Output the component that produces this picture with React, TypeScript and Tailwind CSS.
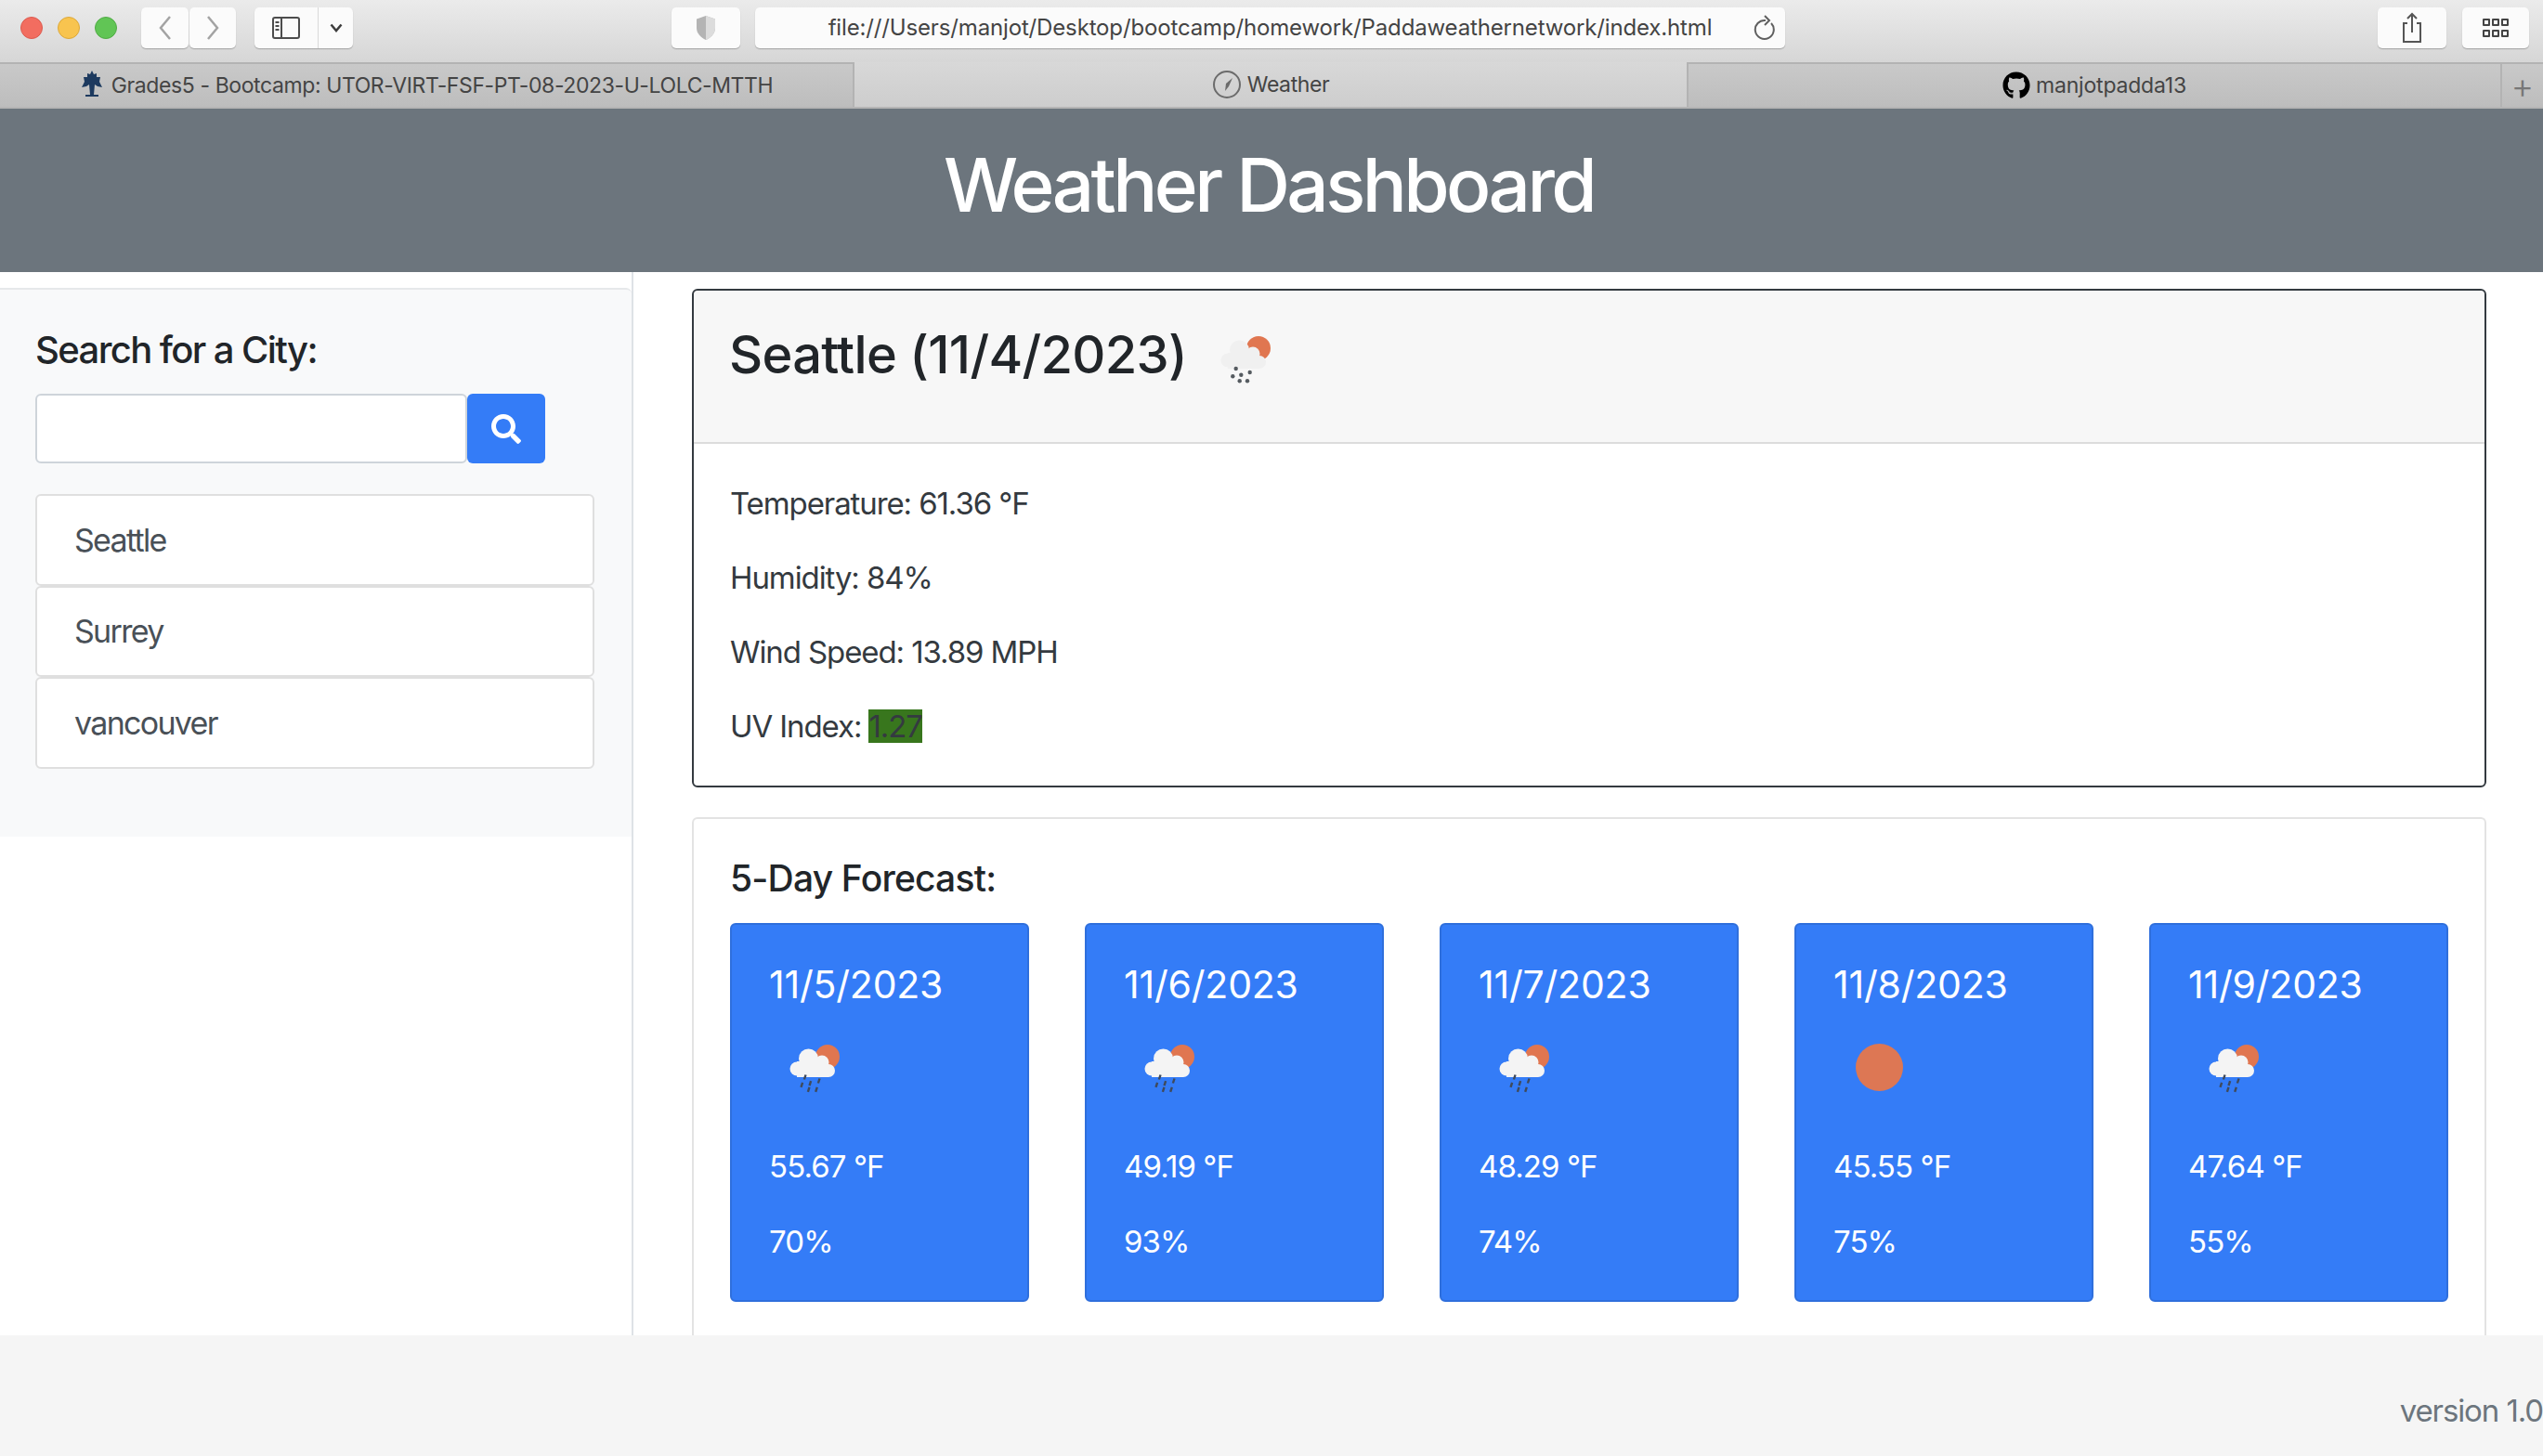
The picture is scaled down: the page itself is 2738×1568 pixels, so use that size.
import { FaGithub, FaSearch } from "react-icons/fa";

const Rain = ({ dots }: { dots?: boolean }) => {
    const drops = [
        [21.7, 45],
        [18.3, 53.3],
        [27.3, 51.7],
        [36.7, 49],
        [25.7, 58.3],
        [34, 58.3],
    ];
    return (
        <g>
            {drops.map(([x, y], i) =>
                dots ? (
                    <circle key={i} cx={x} cy={y} r="2.2" fill="#555b60" />
                ) : (
                    <line key={i} x1={x + 0.8} y1={y - 2.5} x2={x - 0.8} y2={y + 2.5} stroke="#3f4a5c" strokeWidth="2.4" />
                ),
            )}
        </g>
    );
};

const CloudIcon = ({ cloud = "#f4f4f4", dots }: { cloud?: string; dots?: boolean }) => (
    <svg width="80" height="80" viewBox="0 0 80 80" className="block blur-[0.5px]">
        <circle cx="46" cy="23" r="13" fill="#e07650" />
        <g fill={cloud}>
            <circle cx="25.5" cy="25" r="10.5" />
            <circle cx="40" cy="29" r="7.5" />
            <circle cx="13" cy="36" r="7.5" />
            <circle cx="47" cy="38" r="7" />
            <rect x="13" y="28" width="34" height="17" />
        </g>
        <Rain dots={dots} />
    </svg>
);

const SunIcon = () => (
    <svg width="80" height="80" viewBox="0 0 80 80" className="block blur-[0.5px]">
        <circle cx="32.5" cy="34.5" r="25.5" fill="#dd7754" />
    </svg>
);

const TreeIcon = () => (
    <svg width="26" height="34" viewBox="0 0 26 34" fill="#1d3a5f">
        <path d="M13 1l2 4 3-1 0 4 4 0-1 5 3 6-5-1-3-2-1 11h5v2H6v-2h5l-1-11-3 2-5 1 3-6-1-5h4l0-4 3 1z" />
    </svg>
);

const ToolButton = ({ className, children }: { className: string; children?: React.ReactNode }) => (
    <div className={`h-[44px] bg-[#fbfbfb] rounded-[5px] shadow-[0_1px_1px_rgba(0,0,0,0.25)] flex items-center justify-center ${className}`}>
        {children}
    </div>
);

const forecast = [
    { date: "11/5/2023", temp: "55.67 °F", hum: "70%" },
    { date: "11/6/2023", temp: "49.19 °F", hum: "93%" },
    { date: "11/7/2023", temp: "48.29 °F", hum: "74%" },
    { date: "11/8/2023", temp: "45.55 °F", hum: "75%", sunny: true },
    { date: "11/9/2023", temp: "47.64 °F", hum: "55%" },
];

const App = () => {
    return (
        <div className="h-screen w-full flex flex-col overflow-hidden bg-white font-['Inter',sans-serif] text-[#212529]">
            {/* browser chrome */}
            <div className="h-[67px] shrink-0 flex items-start pt-[8px] bg-gradient-to-b from-[#ebebeb] to-[#d6d6d6]">
                <div className="flex items-center gap-[16px] ml-[22px] mt-[10px] w-[130px]">
                    <span className="w-[24px] h-[24px] rounded-full bg-[#f26d60] border border-[#dc5b4f]" />
                    <span className="w-[24px] h-[24px] rounded-full bg-[#f8c44f] border border-[#dca83a]" />
                    <span className="w-[24px] h-[24px] rounded-full bg-[#61c555] border border-[#50ab45]" />
                </div>
                <ToolButton className="w-[51px]">
                    <svg width="16" height="30" viewBox="0 0 16 30" fill="none" stroke="#a3a3a3" strokeWidth="2.500">
                        <path d="M13 3L3 15l10 12" />
                    </svg>
                </ToolButton>
                <ToolButton className="w-[50px] ml-[1px]">
                    <svg width="16" height="30" viewBox="0 0 16 30" fill="none" stroke="#a3a3a3" strokeWidth="2.500">
                        <path d="M3 3l10 12L3 27" />
                    </svg>
                </ToolButton>
                <ToolButton className="w-[106px] ml-[20px]">
                    <div className="w-[69px] h-full flex items-center justify-center border-r border-[#d9d9d9]">
                        <svg width="30" height="24" viewBox="0 0 30 24" fill="none" stroke="#4d4d4d" strokeWidth="2">
                            <rect x="1" y="1" width="28" height="22" rx="2" />
                            <path d="M10 1v22" />
                            <path d="M3.500 6h4M3.500 10h4M3.500 14h4" />
                        </svg>
                    </div>
                    <div className="flex-1 flex items-center justify-center">
                        <svg width="14" height="10" viewBox="0 0 14 10" fill="none" stroke="#3d3d3d" strokeWidth="2.500">
                            <path d="M1.500 1.500L7 8l5.500-6.500" />
                        </svg>
                    </div>
                </ToolButton>
                <ToolButton className="w-[74px] ml-[343px]">
                    <svg width="24" height="28" viewBox="0 0 24 28">
                        <path d="M12 1l10 3.500V14c0 6-4.500 10.500-10 13C6.500 24.500 2 20 2 14V4.500z" fill="#b4b4b4" />
                        <path d="M12 1l10 3.500V14c0 6-4.500 10.500-10 13z" fill="#dcdcdc" />
                    </svg>
                </ToolButton>
                <ToolButton className="w-[1109px] ml-[16px] relative">
                    <span className="text-[24px] tracking-[-0.15px] text-[#444]">
                        file:///Users/manjot/Desktop/bootcamp/homework/Paddaweathernetwork/index.html
                    </span>
                    <svg className="absolute right-[10px] top-[8px]" width="26" height="28" viewBox="0 0 26 28" fill="none" stroke="#5f5f5f" strokeWidth="2">
                        <path d="M21 9a10 10 0 1 1-6-3" />
                        <path d="M14 1l5 5-5 5" />
                    </svg>
                </ToolButton>
                <ToolButton className="w-[74px] ml-[638px]">
                    <svg width="24" height="34" viewBox="0 0 24 34" fill="none" stroke="#555" strokeWidth="2">
                        <path d="M7 12H3v20h18V12h-4" />
                        <path d="M12 22V2M7 7l5-5 5 5" />
                    </svg>
                </ToolButton>
                <ToolButton className="w-[72px] ml-[17px]">
                    <div className="grid grid-cols-3 gap-x-[2px] gap-y-[4px]">
                        {[0, 1, 2, 3, 4, 5].map((i) => (
                            <span key={i} className="w-[8px] h-[8px] border-2 border-[#444] rounded-[1px]" />
                        ))}
                    </div>
                </ToolButton>
            </div>

            {/* tabs */}
            <div className="h-[50px] shrink-0 flex text-[23px] text-[#444] border-b-2 border-[#b5b5b5]">
                <div className="w-[920px] flex items-center justify-center gap-[8px] border-t-2 border-r-2 border-[#b3b3b3] bg-gradient-to-b from-[#c9c9c9] to-[#bdbdbd]">
                    <TreeIcon />
                    <span className="tracking-[-0.4px]">Grades5 - Bootcamp: UTOR-VIRT-FSF-PT-08-2023-U-LOLC-MTTH</span>
                </div>
                <div className="w-[896px] flex items-center justify-center gap-[6px] bg-gradient-to-b from-[#d8d8d8] to-[#cdcdcd]">
                    <svg width="32" height="32" viewBox="0 0 32 32" fill="none">
                        <circle cx="16" cy="16" r="14" stroke="#6b6b6b" strokeWidth="2" />
                        <path d="M22 9l-4 9-4 5 1-8z" fill="#6b6b6b" />
                    </svg>
                    <span className="tracking-[-0.4px]">Weather</span>
                </div>
                <div className="w-[876px] flex items-center justify-center gap-[6px] border-t-2 border-l-2 border-[#b3b3b3] bg-gradient-to-b from-[#c9c9c9] to-[#bdbdbd]">
                    <FaGithub className="text-black w-[30px] h-[30px]" />
                    <span className="tracking-[-0.2px]">manjotpadda13</span>
                </div>
                <div className="flex-1 flex items-center justify-center border-t-2 border-l-2 border-[#b3b3b3] bg-gradient-to-b from-[#c9c9c9] to-[#bdbdbd] text-[38px] font-light text-[#777]">
                    +
                </div>
            </div>

            {/* page header */}
            <header className="h-[176px] shrink-0 bg-[#6c757d] flex items-start justify-center pt-[34px]">
                <h1 className="text-white text-[80px] leading-[96px] font-medium tracking-[-3.6px] mr-[6px]">Weather Dashboard</h1>
            </header>

            <div className="flex-1 flex min-h-0">
                <aside className="w-[682px] shrink-0 pt-[17px] border-r-2 border-[#dee2e6]">
                    <div className="h-[591px] bg-[#f8f9fa] border-t-2 border-[#e6e8ea] rounded-tr-md pl-[38px] pt-[41px]">
                        <h2 className="text-[40px] leading-[48px] font-[550] tracking-[-1.6px]">Search for a City:</h2>
                        <div className="flex mt-[23px]">
                            <input className="w-[465px] h-[75px] bg-white border-2 border-[#ced4da] rounded-l-md rounded-r-md" />
                            <button className="w-[84px] h-[75px] bg-[#347cf7] rounded-md flex items-center justify-center text-white">
                                <FaSearch className="w-[32px] h-[32px]" />
                            </button>
                        </div>
                        <ul className="mt-[33px] w-[602px] flex flex-col text-[#495057] text-[34px] tracking-[-1.7px]">
                            {["Seattle", "Surrey", "vancouver"].map((city) => (
                                <li key={city} className="h-[98.5px] bg-white border-2 border-[#dfdfdf] rounded-md flex items-center pl-[40px]">
                                    {city}
                                </li>
                            ))}
                        </ul>
                    </div>
                </aside>

                <main className="flex-1 min-w-0 pl-[63px] pr-[61px] pt-[18px] overflow-hidden flex flex-col">
                    <section className="h-[537px] shrink-0 border-2 border-[#343a40] rounded-md flex flex-col">
                        <div className="h-[165px] shrink-0 bg-[#f7f7f7] border-b-2 border-[#dcdcdc] rounded-t-md pl-[38px] pt-[39px] flex items-start">
                            <h2 className="text-[56px] leading-[60px] font-[550] tracking-[-0.7px]">Seattle (11/4/2023)</h2>
                            <div className="ml-[31px]">
                                <CloudIcon cloud="#f0f0f0" dots />
                            </div>
                        </div>
                        <div className="pl-[39px] pt-[44px] flex flex-col gap-[40px] text-[33px] leading-[40px] text-[#343a40] tracking-[-1.1px]">
                            <p>Temperature: 61.36 °F</p>
                            <p>Humidity: 84%</p>
                            <p>Wind Speed: 13.89 MPH</p>
                            <p>
                                UV Index: <span className="bg-[#38761d] inline-block leading-[36px]">1.27</span>
                            </p>
                        </div>
                    </section>

                    <section className="flex-1 mt-[32px] border-2 border-b-0 border-[#e3e3e3] rounded-t-md px-[39px] pt-[42px]">
                        <h3 className="text-[39px] leading-[44px] font-[550] tracking-[-0.8px]">5-Day Forecast:</h3>
                        <div className="grid grid-cols-5 gap-[60px] mt-[26px]">
                            {forecast.map((day) => (
                                <div key={day.date} className="h-[408px] bg-[#347cf7] border-2 border-[#2f6fdc] rounded-md text-white pl-[40px] pt-[40px]">
                                    <h4 className="text-[41px] leading-[48px] tracking-[-0.2px]">{day.date}</h4>
                                    <div className="ml-[17px] mt-[31px]">{day.sunny ? <SunIcon /> : <CloudIcon />}</div>
                                    <p className="text-[33px] leading-[40px] mt-[41px] tracking-[-0.9px]">{day.temp}</p>
                                    <p className="text-[33px] leading-[40px] mt-[41px] tracking-[-0.9px]">{day.hum}</p>
                                </div>
                            ))}
                        </div>
                    </section>
                </main>
            </div>

            <footer className="h-[130px] shrink-0 bg-[#f5f5f5] flex justify-end items-start pt-[61px] overflow-hidden">
                <span className="text-[33px] leading-[40px] text-[#6c757d] whitespace-nowrap tracking-[-1.1px]">version 1.0</span>
            </footer>
        </div>
    );
};

export default App;
